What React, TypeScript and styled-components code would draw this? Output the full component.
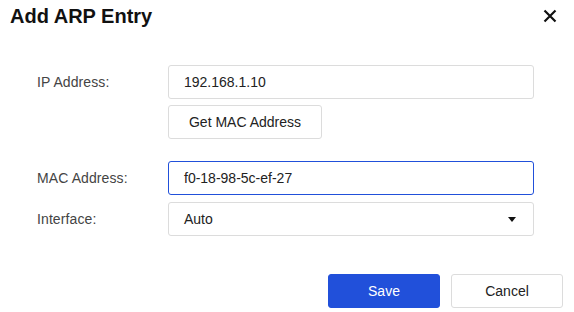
import React from 'react'
import styled, { createGlobalStyle } from 'styled-components'

const GlobalStyle = createGlobalStyle`
  html, body {
    margin: 0;
    padding: 0;
    background: #ffffff;
  }
  body {
    font-family: Arial, "Liberation Sans", sans-serif;
    color: #333333;
  }
`

const Dialog = styled.div`
  width: 574px;
  height: 312px;
  box-sizing: border-box;
  display: flex;
  flex-direction: column;
  background: #fff;
`

const Header = styled.div`
  display: flex;
  align-items: center;
  justify-content: space-between;
  height: 32px;
  padding: 0 17px 0 10px;
`

const Title = styled.h2`
  margin: 0;
  font-size: 20px;
  font-weight: 700;
  color: #111;
  line-height: 32px;
`

const CloseButton = styled.button`
  border: 0;
  background: none;
  padding: 0;
  width: 14px;
  height: 14px;
  display: grid;
  place-items: center;
  cursor: pointer;
`

const Form = styled.div`
  display: flex;
  flex-direction: column;
  padding: 33px 40px 0 37px;
`

const Row = styled.div<{ $gap?: number }>`
  display: grid;
  grid-template-columns: 131px 366px;
  align-items: start;
  margin-top: ${p => p.$gap ?? 0}px;
`

const Label = styled.label`
  font-size: 14px;
  color: #444;
  line-height: 34px;
  letter-spacing: 0.1px;
`

const Field = styled.div`
  display: flex;
  flex-direction: column;
  gap: 6px;
`

const Input = styled.div<{ $focused?: boolean }>`
  height: 34px;
  box-sizing: border-box;
  border: 1px solid ${p => (p.$focused ? '#2150da' : '#dcdcdc')};
  border-radius: 3px;
  padding: 0 15px;
  display: flex;
  align-items: center;
  font-size: 14px;
  color: #222;
`

const Select = styled(Input)`
  justify-content: space-between;
  padding-right: 17px;
`

const Caret = styled.span`
  width: 0;
  height: 0;
  border-left: 4px solid transparent;
  border-right: 4px solid transparent;
  border-top: 5px solid #111;
`

const SmallButton = styled.button`
  align-self: flex-start;
  height: 34px;
  width: 154px;
  box-sizing: border-box;
  border: 1px solid #dcdcdc;
  border-radius: 3px;
  background: #fff;
  font-family: inherit;
  font-size: 14px;
  color: #222;
  cursor: pointer;
`

const Footer = styled.div`
  display: flex;
  justify-content: flex-end;
  gap: 11px;
  padding: 38px 11px 0 0;
`

const ActionButton = styled.button<{ $primary?: boolean }>`
  width: 112px;
  height: 34px;
  box-sizing: border-box;
  border-radius: 3px;
  font-family: inherit;
  font-size: 14px;
  cursor: pointer;
  border: 1px solid ${p => (p.$primary ? '#2150da' : '#dcdcdc')};
  background: ${p => (p.$primary ? '#2150da' : '#fff')};
  color: ${p => (p.$primary ? '#fff' : '#222')};
`

export default function App() {
  return (
    <>
      <GlobalStyle />
      <Dialog>
        <Header>
          <Title>Add ARP Entry</Title>
          <CloseButton aria-label="Close">
            <svg width="14" height="14" viewBox="0 0 14 14">
              <path d="M1.5 1.5 L12.5 12.5 M12.5 1.5 L1.5 12.5" stroke="#111" strokeWidth="2.2" strokeLinecap="butt" />
            </svg>
          </CloseButton>
        </Header>
        <Form>
          <Row>
            <Label>IP Address:</Label>
            <Field>
              <Input>192.168.1.10</Input>
              <SmallButton>Get MAC Address</SmallButton>
            </Field>
          </Row>
          <Row $gap={22}>
            <Label>MAC Address:</Label>
            <Input $focused>f0-18-98-5c-ef-27</Input>
          </Row>
          <Row $gap={7}>
            <Label>Interface:</Label>
            <Select>
              Auto
              <Caret />
            </Select>
          </Row>
        </Form>
        <Footer>
          <ActionButton $primary>Save</ActionButton>
          <ActionButton>Cancel</ActionButton>
        </Footer>
      </Dialog>
    </>
  )
}
